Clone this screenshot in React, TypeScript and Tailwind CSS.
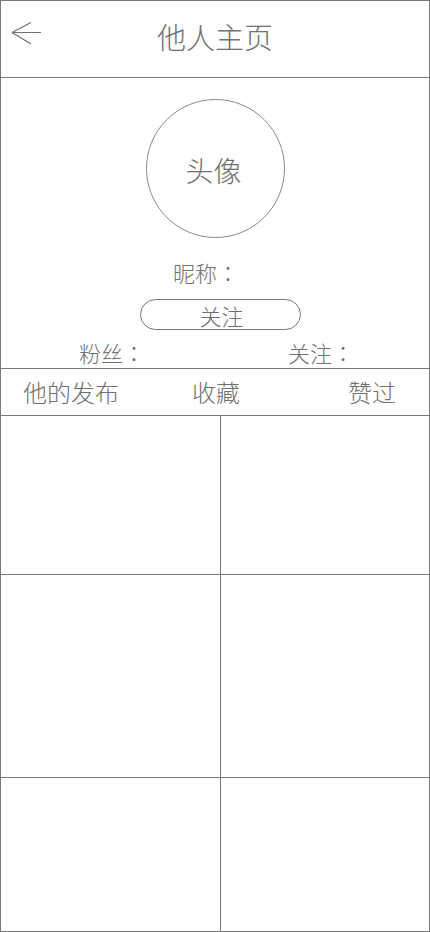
const Colon = () => (
  <span style={{ fontFamily: '"Noto Sans CJK TC", sans-serif' }}>：</span>
);

export default function App() {
  return (
    <div
      className="w-[430px] h-[932px] border border-[#777] bg-white flex flex-col text-[#707070] font-light"
      style={{ fontFamily: '"Noto Sans CJK SC", "Noto Sans", sans-serif' }}
    >
      {/* header */}
      <div className="h-[77px] shrink-0 border-b border-[#777] flex items-start relative">
        <svg
          className="absolute left-[9px] top-[19px]"
          width="34"
          height="26"
          viewBox="0 0 34 26"
          fill="none"
          stroke="#707070"
          strokeWidth="1.2"
        >
          <path d="M2 12.5H31M2 12.5L21 2.5M2 12.5L21 24" />
        </svg>
        <div className="w-full text-center text-[29px] leading-[40px] mt-[15px]">他人主页</div>
      </div>

      {/* profile */}
      <div className="h-[291px] shrink-0 border-b border-[#777] flex flex-col items-center">
        <div className="mt-[21px] w-[139px] h-[139px] rounded-full border border-[#8a8a8a] flex items-center justify-center">
          <span className="text-[28px] leading-[36px] mr-[3px] mt-[3px]">头像</span>
        </div>
        <div className="mt-[20px] self-start ml-[172px] text-[22px] leading-[28px]">
          昵称<Colon />
        </div>
        <div className="mt-[13px] self-start ml-[139px] w-[161px] h-[31px] rounded-full border border-[#777] flex items-center justify-center">
          <span className="text-[22px] leading-[28px] ml-[2px]">关注</span>
        </div>
        <div className="mt-[8px] w-full flex text-[22px] leading-[28px]">
          <span className="ml-[78px] w-[209px]">
            粉丝<Colon />
          </span>
          <span>
            关注<Colon />
          </span>
        </div>
      </div>

      {/* tabs */}
      <div className="h-[47px] shrink-0 border-b border-[#777] flex items-center text-[24px] leading-[30px]">
        <span className="ml-[22px] w-[169px]">他的发布</span>
        <span className="w-[156px]">收藏</span>
        <span>赞过</span>
      </div>

      {/* grid */}
      <div className="flex-1 grid grid-cols-[220px_1fr] grid-rows-[159px_203px_1fr]">
        <div className="border-r border-b border-[#777]" />
        <div className="border-b border-[#777]" />
        <div className="border-r border-b border-[#777]" />
        <div className="border-b border-[#777]" />
        <div className="border-r border-[#777]" />
        <div />
      </div>
    </div>
  );
}
